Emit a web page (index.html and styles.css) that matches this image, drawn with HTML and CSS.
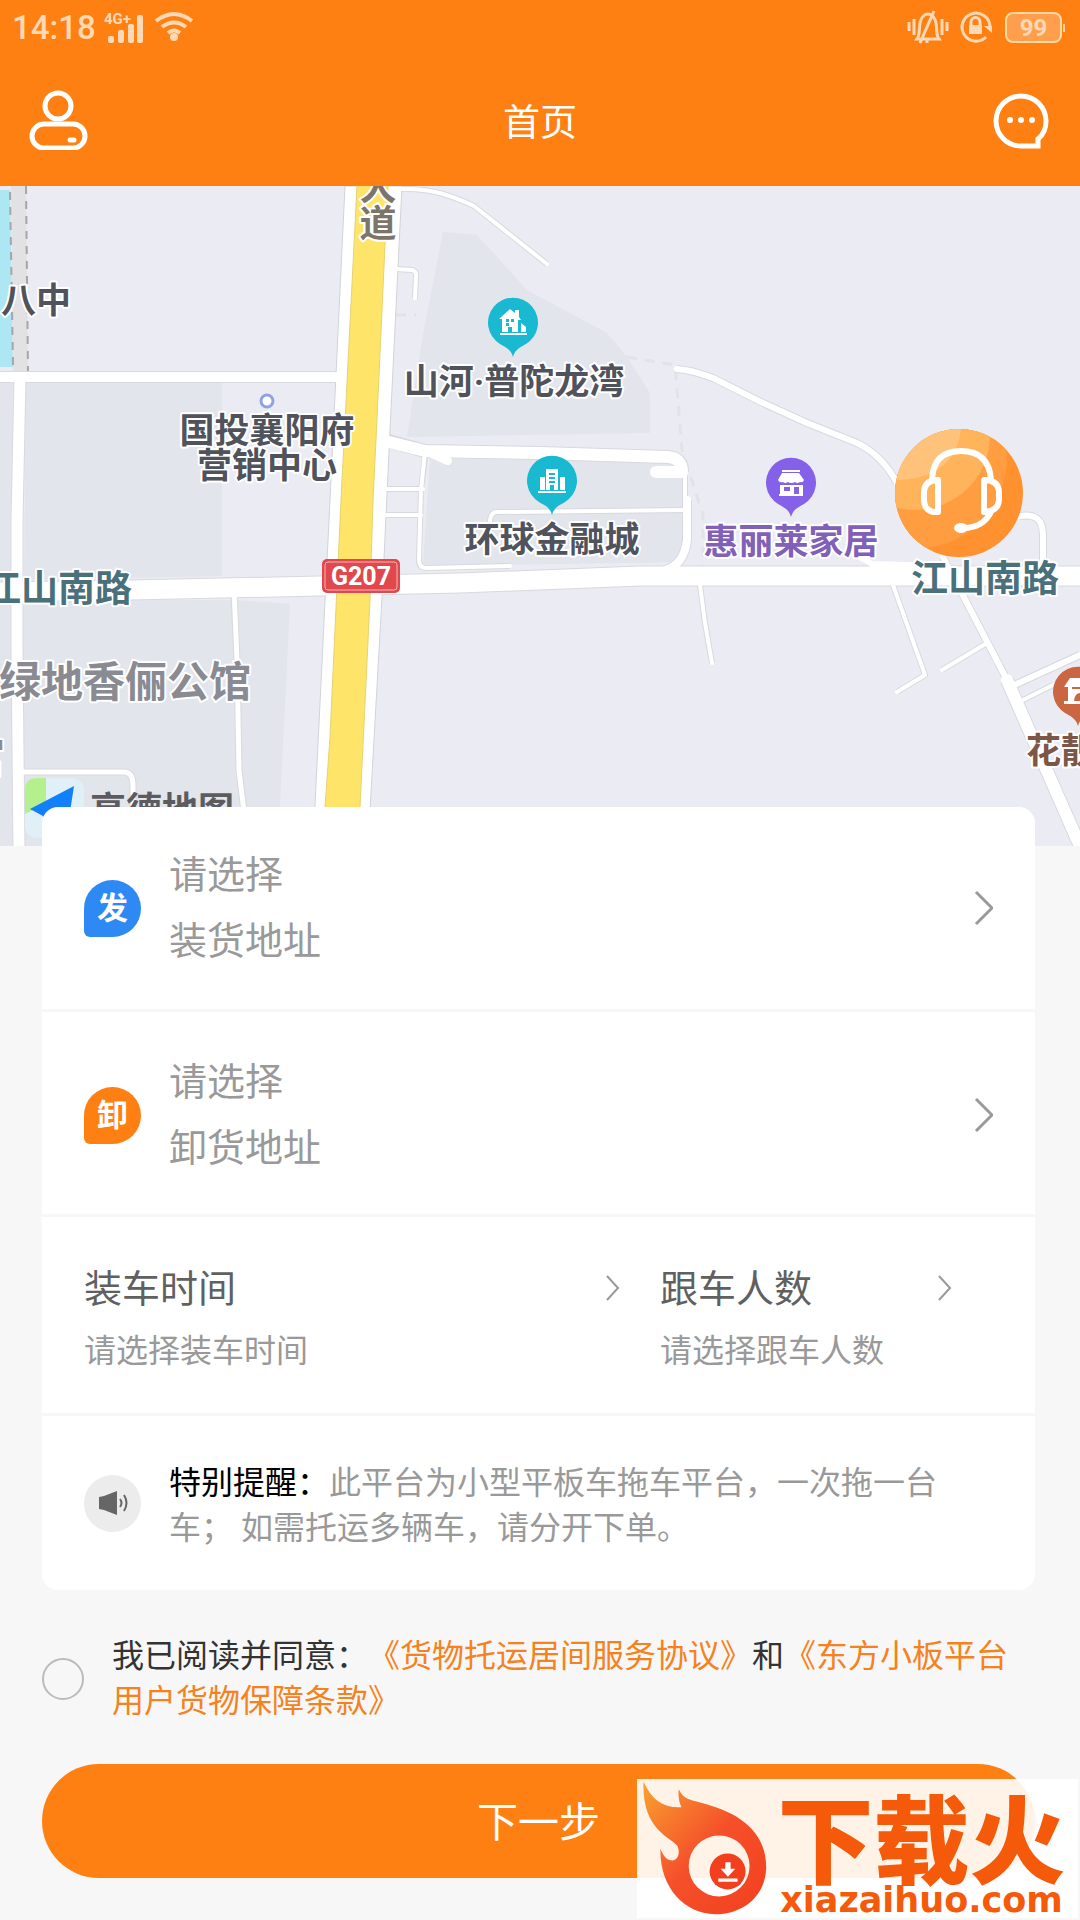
FILE: index.html
```html
<!DOCTYPE html>
<html lang="zh-CN">
<head>
    <meta charset="UTF-8">
    <meta name="viewport" content="width=device-width, initial-scale=1.0">
    <title>首页</title>
    <link rel="stylesheet" href="styles.css">
</head>
<body>

<!-- Header -->
<header class="header">
    <div class="status-bar">
        <div class="status-group">
            <span class="time">14:18</span>
            <svg class="signal" width="40" height="34" viewBox="0 0 40 34">
                <text x="0" y="14">4G+</text>
                <rect x="4" y="26" width="6" height="7" rx="2"/>
                <rect x="14" y="20" width="6" height="13" rx="2"/>
                <rect x="24" y="14" width="6" height="19" rx="2"/>
                <rect x="33" y="5" width="6" height="28" rx="2"/>
            </svg>
            <svg class="wifi" width="40" height="30" viewBox="0 0 40 30">
                <path d="M2 9 Q20 -5 38 9M8 15 Q20 6 32 15M14 21 Q20 16 26 21"/>
                <circle cx="20" cy="25" r="4"/>
            </svg>
        </div>
        <div class="status-group status-right">
            <svg class="line-icon" width="42" height="36" viewBox="0 0 42 36">
                <path d="M2 13v9M7 10v16M35 10v16M40 13v9"/>
                <path d="M10 30h22c-3-4-2-10-3-16-1-5-4-9-8-9s-7 4-8 9c-1 6 0 12-3 16zM27 2L13 34M20 31v3"/>
            </svg>
            <svg class="line-icon" width="34" height="34" viewBox="0 0 34 34">
                <path d="M27 27a14 14 0 1 1 4-11M12 15v-3a4 4 0 0 1 9 0v3"/>
                <path class="solid" d="M10 15h13v9h-13zM25 16h8v7z"/>
            </svg>
            <span class="battery">99</span>
        </div>
    </div>
    <div class="nav">
        <button class="icon-button" aria-label="我的">
            <svg width="60" height="60" viewBox="0 0 60 60">
                <circle cx="30" cy="16" r="13"/>
                <rect x="4" y="34" width="53" height="24" rx="12"/>
                <path d="M42 50h4"/>
            </svg>
        </button>
        <h1>首页</h1>
        <button class="icon-button" aria-label="消息">
            <svg width="60" height="60" viewBox="0 0 60 60">
                <path d="M46 56H29A25 25 0 1 1 54 31c0 8-3 14-8 18z"/>
                <path d="M18 30v0M29 30v0M40 30v0" stroke-width="6"/>
            </svg>
        </button>
    </div>
</header>

<!-- Map -->
<section class="map">
    <svg class="map-canvas" viewBox="0 186 1080 660" preserveAspectRatio="xMidYMid slice">
        <!-- blocks -->
        <g class="block">
            <path d="M0 382H14V846H0zM26 382H222V576L24 580zM22 600H233L244 846H22zM237 600L290 604L278 846H244z"/>
            <path d="M443 232L477 235L527 290L607 333L627 357L650 393V433L407 437L422 340z"/>
            <path d="M430 458L685 463V562L423 566z"/>
        </g>
        <path class="water" d="M0 190H10L13 367H0z"/>
        <path class="strip" d="M11 186H26L28 372H13z"/>
        <path class="strip-edge" d="M10 192L13 367M26 186L28 372"/>
        <path class="footpath" d="M627 357L675 365L682 450L703 515V570M396 315H416"/>

        <!-- road edges, then the white surface over them -->
        <g class="roads-edge">
            <path d="M0 377H345" stroke-width="12"/>
            <path d="M20 382L17 520V650L19 846" stroke-width="13"/>
            <path d="M0 592L130 590L320 586L460 583L640 576H1080" stroke-width="21"/>
            <path d="M677 369Q692 370 713 378L763 403L807 423L857 443Q882 455 897 483" stroke-width="8"/>
            <path d="M1020 516Q1043 512 1043 535V566" stroke-width="8"/>
            <path d="M234 595L237 660L239 770L245 820M22 772H124Q133 772 133 785V846" stroke-width="7"/>
            <path d="M385 440L425 451L540 453L668 457Q682 458 682 472" stroke-width="14"/>
            <path d="M687 500V540Q684 565 665 570" stroke-width="10"/>
            <path d="M1007 680L1032 737L1080 846" stroke-width="14"/>
            <path d="M943 557L1007 680M1010 687L1080 655" stroke-width="8"/>
            <path d="M700 585L705 623L712 663M893 585L925 675L897 692M987 643L942 670M1023 700L1053 685" stroke-width="6"/>
            <path d="M402 189C430 188 450 195 474 206L547 264M395 269L412 270Q416 271 416 275L415 298" stroke-width="6"/>
            <path d="M425 457L421 490L419 560Q419 568 427 568L510 566M385 489H423M385 515H421M490 535V520Q491 512 497 512L686 510M685 475V505" stroke-width="6"/>
        </g>
        <path class="main-edge" d="M345 186H402L390 430L383 580L368 846H313L330 500z"/>
        <g class="roads">
            <path d="M0 377H345" stroke-width="10"/>
            <path d="M20 378L17 520V650L19 850" stroke-width="11"/>
            <path d="M0 592L130 590L320 586L460 583L640 576H1080" stroke-width="19"/>
            <path d="M677 369Q692 370 713 378L763 403L807 423L857 443Q882 455 897 483" stroke-width="6"/>
            <path d="M1020 516Q1043 512 1043 535V570M847 550L872 564L940 566" stroke-width="6"/>
            <path d="M234 590L237 660L239 770L245 820M20 772H124Q133 772 133 785V846" stroke-width="5"/>
            <path d="M381 440L425 451L540 453L668 457Q682 458 682 472H656" stroke-width="12"/>
            <path d="M432 454L448 461M687 500V540Q684 565 665 570" stroke-width="8"/>
            <path d="M1007 680L1032 737L1080 846" stroke-width="12"/>
            <path d="M943 557L1007 680M1010 687L1080 655" stroke-width="6"/>
            <path d="M700 585L705 623L712 663M893 585L925 675L897 692M987 643L942 670M1023 700L1053 685" stroke-width="4"/>
            <path d="M402 189C430 188 450 195 474 206L547 264M395 269L412 270Q416 271 416 275L415 298" stroke-width="4"/>
            <path d="M425 452L421 490L419 560Q419 568 427 568L510 566M383 489H423M383 515H421M490 535V520Q491 512 497 512L686 510M685 475V505" stroke-width="4"/>
        </g>
        <path class="highway" d="M357 186H388L385 245L376 440L373 500L370 600L360 807L359 846H323L325 807L330 737L341 500z"/>

        <!-- road number -->
        <g class="road-number">
            <rect x="322" y="559" width="78" height="34" rx="5"/>
            <rect class="inner" x="325" y="562" width="72" height="28" rx="3"/>
            <text x="361" y="585">G207</text>
        </g>

        <!-- place markers -->
        <g class="pin teal" transform="translate(513 323)">
            <path class="drop" d="M0 34C-2 26-8 24-13 21A25 25 0 1 1 13 21C8 24 2 26 0 34z"/>
            <path class="glyph" d="M-14-4L-3-14L2-10V-13H6V-6L8-3H5V9H-1V4H-5V9H-11V-4zM8 9V0L13 4V9zM-13 10H14V12H-13z"/>
            <path class="hole" d="M-7-4h3v3h-3zM-2-4h3v3h-3zM-7 0h3v3h-3z"/>
        </g>
        <g class="pin teal" transform="translate(552 481)">
            <path class="drop" d="M0 34C-2 26-8 24-13 21A25 25 0 1 1 13 21C8 24 2 26 0 34z"/>
            <path class="glyph" d="M-12-4H-7V9H-12zM-6-12H6V9H2V4H-2V9H-6zM8-4H13V9H8zM-14 10H14V12H-14z"/>
            <path class="hole" d="M-3-8h6v2h-6zM-3-4h6v2h-6zM-3 0h6v2h-6z"/>
        </g>
        <g class="pin purple" transform="translate(791 483)">
            <path class="drop" d="M0 34C-2 26-8 24-13 21A25 25 0 1 1 13 21C8 24 2 26 0 34z"/>
            <path class="glyph" d="M-9-13H9V-11H-9zM-9-10H8L13-3Q12 0 9-1Q6 1 4-1Q0 1-3-1Q-6 1-8-1Q-12 0-13-3zM-11 2H12V13H-12V11H-11z"/>
            <path class="hole" d="M-7 4h6v4h-6zM3 4h5v7h-5z"/>
        </g>
        <g class="pin brown" transform="translate(1078 692)">
            <path class="drop" d="M0 34C-2 26-8 24-13 21A25 25 0 1 1 13 21C8 24 2 26 0 34z"/>
            <path class="glyph" d="M-8-14H10V-10L14-6H10V9H14V12H-14V9H-10V-5H-14z"/>
            <path class="hole" d="M-6-5H8V-3H-6zM-4 9Q-3 1 2 1V9z"/>
        </g>
        <circle class="poi-dot" cx="267" cy="401" r="6"/>

        <!-- place names -->
        <g class="names">
            <text x="1" y="313">八中</text>
            <text x="267" y="443" text-anchor="middle">国投襄阳府</text>
            <text x="267" y="478" text-anchor="middle">营销中心</text>
            <text x="514" y="394" text-anchor="middle">山河·普陀龙湾</text>
            <text x="552" y="552" text-anchor="middle">环球金融城</text>
            <text class="name-shop" x="791" y="554" text-anchor="middle">惠丽莱家居</text>
            <text class="name-hotel" x="1026" y="763">花靓</text>
            <text class="name-road" x="132" y="602" text-anchor="end">江山南路</text>
            <text class="name-road" x="911" y="592">江山南路</text>
            <text class="name-street" x="378" y="200" text-anchor="middle">大</text>
            <text class="name-street" x="378" y="237" text-anchor="middle">道</text>
            <text class="name-area" x="-1" y="697">绿地香俪公馆</text>
            <text class="name-area" x="5" y="772" text-anchor="end">宫</text>
        </g>

        <!-- map provider -->
        <rect x="25" y="778" width="59" height="60" rx="12" fill="#dff1f6"/>
        <path d="M46 778V804L25 814V790Q25 778 37 778z" fill="#b5f08e"/>
        <path d="M30 809L74 786L69 818L45 826L43 816z" fill="#1280fa"/>
        <text class="provider" x="90" y="823">高德地图</text>
    </svg>
    <button class="service" aria-label="客服">
        <svg width="129" height="129" viewBox="0 0 129 129">
            <defs>
                <clipPath id="disc"><circle cx="64" cy="64" r="64"/></clipPath>
            </defs>
            <g clip-path="url(#disc)">
                <rect width="129" height="129" fill="#ff912f"/>
                <circle cx="20" cy="28" r="92" fill="#ff9d40"/>
                <circle cx="20" cy="6" r="75" fill="#ffb45c"/>
                <path d="M0 0H66Q60 50 0 51z" fill="#ffc27a"/>
            </g>
            <g class="headset">
                <path d="M37 51Q38 22 66 22Q94 22 96 51M43 51V83Q29 84 29 70V64Q29 51 43 51zM89 51V83Q104 82 104 70V64Q104 51 89 51zM96 83Q88 99 68 99"/>
                <ellipse cx="66" cy="99" rx="4" ry="2"/>
            </g>
        </svg>
    </button>
</section>

<!-- Order Card -->
<main class="card">
    <button class="row address-row">
        <span class="badge badge-from">发</span>
        <span class="address-text">
            <span>请选择</span>
            <span>装货地址</span>
        </span>
        <svg class="arrow" width="20" height="36" viewBox="0 0 20 36"><path d="M3 2L19 18L3 34"/></svg>
    </button>
    <button class="row address-row">
        <span class="badge badge-to">卸</span>
        <span class="address-text">
            <span>请选择</span>
            <span>卸货地址</span>
        </span>
        <svg class="arrow" width="20" height="36" viewBox="0 0 20 36"><path d="M3 2L19 18L3 34"/></svg>
    </button>
    <div class="row options">
        <button class="option">
            <span class="option-title">装车时间
                <svg class="arrow arrow-small" width="14" height="26" viewBox="0 0 14 26"><path d="M1 1L12 13L1 25"/></svg>
            </span>
            <span class="option-hint">请选择装车时间</span>
        </button>
        <button class="option">
            <span class="option-title">跟车人数
                <svg class="arrow arrow-small" width="14" height="26" viewBox="0 0 14 26"><path d="M1 1L12 13L1 25"/></svg>
            </span>
            <span class="option-hint">请选择跟车人数</span>
        </button>
    </div>
    <div class="row notice">
        <span class="badge badge-notice">
            <svg width="30" height="26" viewBox="0 0 30 26">
                <path d="M1 7L6 6L19 1V25L6 20L1 19z" fill="#666"/>
                <path d="M22 9Q25 13 22 17M26 5Q31 13 26 21" fill="none" stroke="#666" stroke-width="2"/>
            </svg>
        </span>
        <p><strong>特别提醒：</strong>此平台为小型平板车拖车平台，一次拖一台车； 如需托运多辆车，请分开下单。</p>
    </div>
</main>

<!-- Agreement -->
<div class="agreement">
    <input type="checkbox" id="agree">
    <p>
        <label for="agree">我已阅读并同意：</label><a href="#service">《货物托运居间服务协议》</a>和<a href="#protect">《东方小板平台用户货物保障条款》</a>
    </p>
</div>

<button class="next">下一步</button>

<!-- Site Mark -->
<div class="site-mark">
    <svg width="132" height="139" viewBox="51 117 396 418">
        <defs>
            <linearGradient id="flame" x1="0" y1="0" x2="1" y2="1">
                <stop offset="0" stop-color="#f9a22e"/>
                <stop offset="0.5" stop-color="#f5502a"/>
                <stop offset="1" stop-color="#f2401f"/>
            </linearGradient>
        </defs>
        <path fill="url(#flame)" fill-rule="evenodd" d="M70 125C95 180 130 205 184 202C176 184 174 168 176 148C190 178 212 180 240 188C350 215 440 270 439 385C437 465 375 524 285 524C190 522 118 440 121 327C130 350 140 362 158 362C174 360 181 340 172 318C150 290 65 270 70 125zM297 287A91 91 0 1 0 298 470A91 91 0 1 0 297 287z"/>
        <circle cx="323" cy="395" r="54" fill="#f2401f"/>
        <path d="M316 367H332V387H346L324 411L302 387H316zM295 416H353V426H295z" fill="#fff"/>
    </svg>
    <div class="site-name">
        <b>下载火</b>
        <span>xiazaihuo.com</span>
    </div>
</div>

</body>
</html>
```

FILE: styles.css
```css
/* General Styling */
* {
    box-sizing: border-box;
}
body {
    position: relative;
    margin: 0;
    min-height: 100vh;
    font-family: Roboto, "Noto Sans CJK SC", sans-serif;
    font-size: 32px;
    background: #f7f7f7;
    color: #333;
    text-spacing-trim: space-all;
}
button {
    padding: 0;
    border: none;
    background: none;
    font: inherit;
    color: inherit;
    text-align: left;
    cursor: pointer;
}
svg {
    display: block;
    flex: none;
}

/* Header */
.header {
    background: #ff8012;
    color: #fff;
}
.status-bar {
    display: flex;
    justify-content: space-between;
    height: 54px;
    padding: 0 18px 0 12px;
    color: #ffd9b5;
}
.status-group {
    display: flex;
    align-items: center;
    gap: 10px;
}
.time {
    font-size: 33px;
    font-weight: 500;
}
.signal {
    margin-left: -2px;
    fill: #ffd9b5;
    font-size: 15px;
    font-weight: 700;
}
.wifi {
    fill: #ffd9b5;
}
.wifi path {
    fill: none;
    stroke: #ffd9b5;
    stroke-width: 4;
}
.line-icon {
    fill: none;
    stroke: #ffd9b5;
    stroke-width: 3;
}
.line-icon .solid {
    fill: #ffd9b5;
    stroke: none;
}
.battery {
    position: relative;
    width: 57px;
    height: 31px;
    margin-left: 2px;
    border: 2px solid #ffd9a0;
    border-radius: 8px;
    background: #ff9f4d;
    font-size: 24px;
    font-weight: 700;
    line-height: 28px;
    text-align: center;
}
.battery::after {
    content: "";
    position: absolute;
    top: 10px;
    right: -5px;
    width: 2px;
    height: 8px;
    background: #ffd9a0;
}
.nav {
    display: flex;
    align-items: center;
    justify-content: space-between;
    height: 132px;
    padding: 0 28px 0 28px;
}
.nav h1 {
    margin: 0;
    font-size: 37px;
    font-weight: 400;
}
.icon-button svg {
    fill: none;
    stroke: #fff;
    stroke-width: 5;
    stroke-linecap: round;
}

/* Map */
.map {
    position: relative;
    height: 660px;
    overflow: hidden;
    background: #ebebf3;
}
.map-canvas {
    width: 100%;
    height: 100%;
}
.block { fill: #e2e5eb; }
.water { fill: #aee7f4; }
.strip { fill: #e2e2e4; }
.strip-edge {
    stroke: #a5a5aa;
    stroke-width: 2;
    stroke-dasharray: 8 7;
}
.footpath {
    fill: none;
    stroke: #e2e3e7;
    stroke-width: 3;
    stroke-dasharray: 10 8;
}
.roads, .roads-edge {
    fill: none;
    stroke: #fff;
    stroke-linejoin: round;
}
.roads {
    stroke-linecap: round;
}
.roads-edge {
    stroke: #d8d9de;
}
.main-edge {
    fill: #fff;
    stroke: #d2d3d9;
}
.highway {
    fill: #fee468;
    stroke: #e6d272;
}
.road-number {
    fill: #e0484d;
}
.road-number .inner {
    fill: none;
    stroke: #f5b5b7;
}
.road-number text {
    fill: #fff;
    font-size: 25px;
    font-weight: 700;
    text-anchor: middle;
}
.teal { fill: #19b9d1; }
.purple { fill: #8561ea; }
.brown { fill: #cb6642; }
.pin .glyph { fill: #fff; }
.poi-dot {
    fill: #fff;
    stroke: #8fa3e0;
    stroke-width: 3;
}
.names text {
    font-size: 35px;
    font-weight: 700;
    fill: #50525c;
    stroke: #fff;
    stroke-width: 4;
    stroke-linejoin: round;
    paint-order: stroke;
}
.names .name-shop { fill: #8160b8; }
.names .name-hotel { fill: #7c5646; }
.names .name-road {
    font-size: 37px;
    fill: #49707b;
}
.names .name-street {
    font-size: 37px;
    fill: #7d7567;
}
.names .name-area {
    font-size: 42px;
    fill: #8a8b92;
}
.provider {
    font-size: 36px;
    font-weight: 700;
    fill: #5c5c60;
}
.service {
    position: absolute;
    top: 243px;
    right: 56px;
}
.headset {
    fill: none;
    stroke: #fff;
    stroke-width: 6;
    stroke-linejoin: round;
}

/* Order Card */
.card {
    position: relative;
    margin: -39px 45px 0 42px;
    border-radius: 16px;
    background: #fff;
}
.row {
    display: flex;
    align-items: center;
    width: 100%;
    padding: 0 42px;
    border-bottom: 3px solid #f7f7f7;
}
.row:last-child {
    border-bottom: none;
}
.address-row {
    height: 205px;
    font-size: 38px;
    line-height: 66px;
    color: #999;
}
.address-row + .address-row {
    padding-top: 4px;
}
.address-text {
    display: flex;
    flex-direction: column;
    flex: 1;
}
.badge {
    display: flex;
    align-items: center;
    justify-content: center;
    flex: none;
    width: 57px;
    height: 57px;
    margin-right: 28px;
    border-radius: 50%;
    font-size: 31px;
    font-weight: 700;
    line-height: 57px;
    color: #fff;
}
.badge-from {
    border-bottom-left-radius: 6px;
    background: #2f89f5;
}
.badge-to {
    border-bottom-left-radius: 6px;
    background: #ff8012;
}
.badge-notice {
    background: #ececec;
}
.arrow {
    fill: none;
    stroke: #999;
    stroke-width: 3;
}
.arrow-small {
    stroke-width: 2;
}

/* Loading time and passengers */
.options {
    display: grid;
    grid-template-columns: 536fr 292fr;
    gap: 40px;
    height: 199px;
    padding: 10px 83px 0 42px;
}
.option {
    display: flex;
    flex-direction: column;
    line-height: 62px;
}
.option-title {
    display: flex;
    align-items: center;
    justify-content: space-between;
    width: 100%;
    font-size: 38px;
    color: #606060;
}
.option-title .arrow {
    margin-bottom: 2px;
}
.option-hint {
    color: #999;
}

/* Notice */
.notice {
    height: 174px;
    line-height: 45px;
    color: #999;
}
.notice p {
    flex: 1;
    margin: 0;
    padding-top: 6px;
}
.notice strong {
    font-weight: 400;
    color: #000;
}

/* Agreement */
.agreement {
    display: flex;
    align-items: center;
    gap: 28px;
    margin: 44px 45px 40px 42px;
    line-height: 45px;
}
.agreement input {
    flex: none;
    appearance: none;
    width: 42px;
    height: 42px;
    margin: 0;
    border: 2px solid #bbb;
    border-radius: 50%;
}
.agreement input:checked {
    background: #ff8012;
}
.agreement p {
    margin: 0;
}
.agreement a {
    color: #f58220;
    text-decoration: none;
}

/* Next Button */
.next {
    display: block;
    width: calc(100% - 87px);
    height: 114px;
    margin: 0 45px 42px 42px;
    padding-bottom: 4px;
    border-radius: 57px;
    background: #ff8012;
    font-size: 41px;
    color: #fff;
    text-align: center;
}

/* Site Mark */
.site-mark {
    position: absolute;
    right: 2px;
    bottom: 2px;
    display: flex;
    width: 441px;
    height: 139px;
    background: rgba(255, 255, 255, 0.9);
    color: #f55a0a;
}
.site-name {
    display: flex;
    flex-direction: column;
    align-items: center;
    flex: 1;
    padding: 20px 4px 0 0;
}
.site-name b {
    font-size: 96px;
    font-weight: 900;
    line-height: 88px;
}
.site-name span {
    font-family: "DejaVu Sans", sans-serif;
    font-size: 35px;
    font-weight: 700;
    line-height: 26px;
}
```
